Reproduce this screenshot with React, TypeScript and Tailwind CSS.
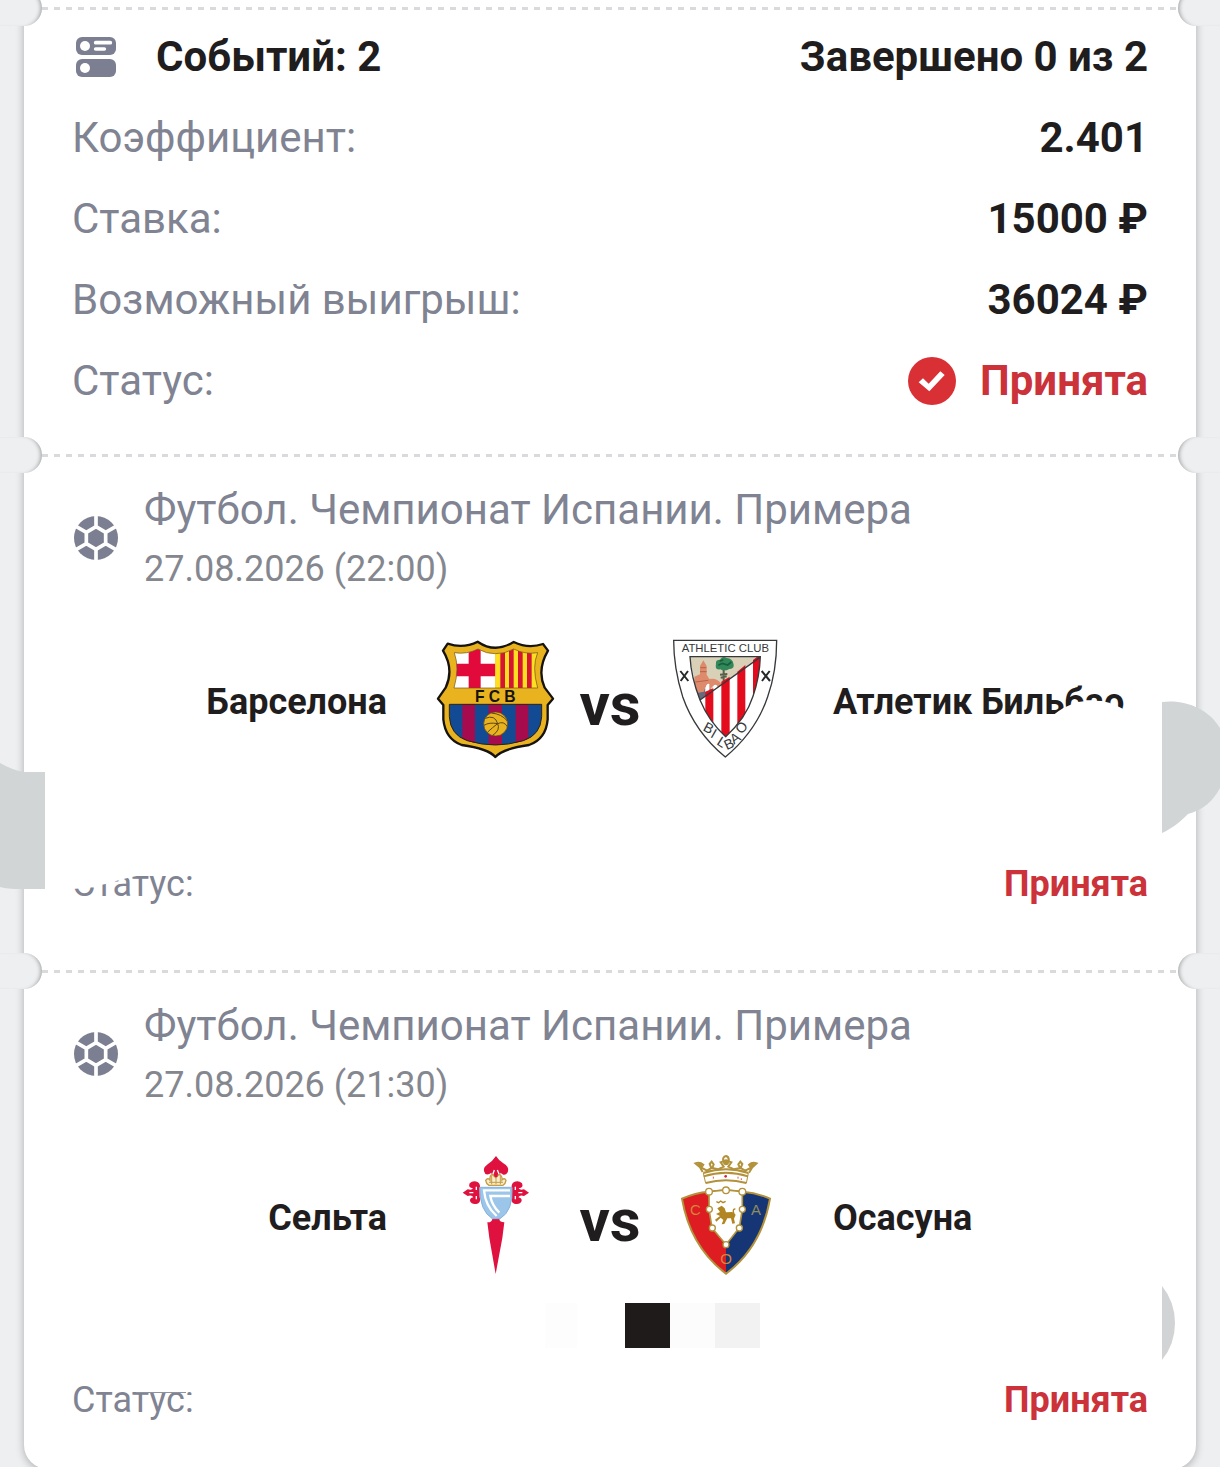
import type { ReactNode } from 'react';
import { clsx } from 'clsx';

function EventsIcon() {
  return (
    <svg viewBox="0 0 144 120" className="h-10 w-12 shrink-0" aria-hidden="true">
      <rect x="12" width="120" height="54" rx="18" fill="#7b7f91" />
      <rect x="12" y="66" width="120" height="54" rx="18" fill="#7b7f91" />
      <circle cx="39" cy="27" r="15" fill="#fff" />
      <circle cx="39" cy="93" r="15" fill="#fff" />
      <path d="M71 17h44M71 36h26" stroke="#fff" strokeWidth="11" strokeLinecap="round" />
    </svg>
  );
}

function BallIcon() {
  return (
    <svg viewBox="-72 -72 144 144" className="size-12 shrink-0" aria-hidden="true">
      <circle r="66" fill="#7b7f91" />
      <path
        d="M0-34 29-17V17L0 34-29 17V-17ZM0-34V-72M29-17 64-37M29 17 64 37M0 34V72M-29 17-64 37M-29-17-64-37"
        fill="none"
        stroke="#fff"
        strokeWidth="11"
      />
    </svg>
  );
}

function AcceptedIcon() {
  return (
    <svg viewBox="0 0 144 144" className="size-12 shrink-0" aria-hidden="true">
      <circle cx="72" cy="72" r="72" fill="#d93036" />
      <path d="M32 76 45 64 62 80 97 43 110 54 64 103Z" fill="#fff" />
    </svg>
  );
}

function BarcelonaCrest() {
  return (
    <svg viewBox="45 57 360 360" className="size-[120px] shrink-0" role="img" aria-label="Барселона">
      <defs>
        <clipPath id="fcb-top">
          <path d="M103 98Q140 104 174 87Q200 102 226 101Q254 102 281 87Q314 104 353 98Q335 140 353 204H102Q119 145 103 98Z" />
        </clipPath>
        <clipPath id="fcb-bottom">
          <path d="M88 253H365V290Q362 345 310 362Q265 375 226 375Q185 375 142 362Q91 345 88 290Z" />
        </clipPath>
      </defs>
      <path
        d="M83 71Q130 87 173 65Q225 101 281 66Q325 87 369 72L384 92Q350 150 374 203L399 236L383 255V298Q378 357 327 375Q248 386 226 411Q205 386 125 375Q76 357 70 298V255L54 236L77 203Q103 148 69 92Z"
        fill="#e9b320"
        stroke="#16130e"
        strokeWidth="7"
        strokeLinejoin="round"
      />
      <g clipPath="url(#fcb-top)">
        <path d="M95 80H226V210H95Z" fill="#fff" />
        <path d="M146 80h36v130h-36zM95 131h131v38H95z" fill="#e2093b" />
        <path d="M226 80H360V210H226Z" fill="#ffdf1f" />
        <path d="M241 80h14v130h-14zM267 80h14v130h-14zM294 80h14v130h-14zM321 80h14v130h-14z" fill="#d41534" />
      </g>
      <path
        d="M103 98Q140 104 174 87Q200 102 226 101Q254 102 281 87Q314 104 353 98Q335 140 353 204H102Q119 145 103 98Z"
        fill="none"
        stroke="#6b5217"
        strokeWidth="2"
      />
      <g clipPath="url(#fcb-bottom)">
        <path d="M80 250H370V380H80Z" fill="#124b94" />
        <path d="M127 250h38v130h-38zM206 250h40v130h-40zM287 250h38v130h-38z" fill="#a60b4e" />
      </g>
      <path
        d="M88 253H365V290Q362 345 310 362Q265 375 226 375Q185 375 142 362Q91 345 88 290Z"
        fill="none"
        stroke="#2a2118"
        strokeWidth="3"
      />
      <circle cx="227" cy="312" r="36" fill="#e9b320" stroke="#5b4515" strokeWidth="2" />
      <path
        d="M196 295Q225 283 233 311Q208 306 192 316M214 279Q245 282 261 302M233 311Q242 330 218 346M233 311Q252 302 262 320M202 337Q218 322 233 311"
        stroke="#5b4515"
        strokeWidth="3"
        fill="none"
      />
      <text
        x="165 206 253"
        y="245"
        className="font-['Liberation_Sans',sans-serif] text-[47px] font-bold"
        fill="#16130e"
      >
        FCB
      </text>
    </svg>
  );
}

function AthleticCrest() {
  return (
    <svg viewBox="75 57 360 360" className="size-[120px] shrink-0" role="img" aria-label="Атлетик Бильбао">
      <defs>
        <clipPath id="ath-inner">
          <path d="M150 110H361Q359 170 339 229Q318 295 257 350Q207 305 180 240Q153 170 150 110Z" />
        </clipPath>
      </defs>
      <path
        d="M101 61H410Q410 155 383 230Q349 333 256 411Q165 336 128 230Q101 145 101 61Z"
        fill="#fff"
        stroke="#36383a"
        strokeWidth="4"
      />
      <g clipPath="url(#ath-inner)">
        <path d="M145 105H365L180 242Z" fill="#d8d1b8" />
        <path d="M145 225 200 205 240 215 180 250Z" fill="#666a7c" />
        <path d="M163 208V170L180 163V138L190 121L200 138V164L208 177Q230 172 243 190L240 208H228Q220 188 212 208H204Q198 190 192 215L166 220Z" fill="#dd8b6c" />
        <path d="M181 143h18M180 155h20M166 186 205 181" stroke="#ba6347" strokeWidth="3" />
        <path d="M195 215Q197 188 208 192V215ZM218 207Q220 188 232 197V208Z" fill="#fff" />
        <path d="M251 145V183M240 164 262 162M242 173 260 169" stroke="#58604a" strokeWidth="6" />
        <path d="M228 132Q226 119 240 119Q247 106 260 114Q278 116 280 130Q285 147 268 147Q252 156 241 148Q224 151 228 132Z" fill="#32885a" />
        <path d="M235 136 247 130 263 135 274 126M239 124 250 119" stroke="#175f3a" strokeWidth="5" fill="none" />
        <path d="M180 240 360 110V360H180Z" fill="#fff" />
        <path d="M196 215 220 205V330H196ZM244 185 269 170V360H244ZM292 155 316 135V310H292ZM339 120 365 100V250H339Z" fill="#e30b1c" />
      </g>
      <path
        d="M150 110H361Q359 170 339 229Q318 295 257 350Q207 305 180 240Q153 170 150 110ZM180 240 360 112"
        fill="none"
        stroke="#36383a"
        strokeWidth="4"
      />
      <path d="M121 153 145 183M144 153 122 183M365 153 390 183M389 153 366 183" stroke="#26282a" strokeWidth="6" />
      <g className="font-['Liberation_Sans',sans-serif] font-normal" fill="#36383a">
        <text x="256" y="97" textAnchor="middle" className="text-[34px]">
          ATHLETIC CLUB
        </text>
        <text
          x="187 209 228 260 282 303"
          y="330 350 372 391 374 344"
          rotate="28 30 32 -25 -35 -45"
          className="text-[42px]"
        >
          BILBAO
        </text>
      </g>
    </svg>
  );
}

function CeltaCrest() {
  return (
    <svg viewBox="-15 45 360 360" className="size-[120px] shrink-0" role="img" aria-label="Сельта">
      <g fill="#df123f">
        <path d="M168 48Q176 61 190 70Q208 80 204 94Q201 105 190 104L181 98Q180 112 183 118H153Q157 105 154 98Q145 106 136 102Q124 87 143 73Q158 63 168 48Z" />
        <path d="M68 158 83 148Q96 151 99 145Q83 143 89 130Q100 119 114 127Q123 134 119 148V171Q124 187 112 191Q95 195 90 183Q89 174 100 172Q96 164 83 168Z" />
        <path d="M267 158 252 148Q239 151 236 145Q252 143 246 130Q235 119 221 127Q212 134 216 148V171Q211 187 223 191Q240 195 245 183Q246 174 235 172Q239 164 252 168Z" />
        <path d="M157 237H178Q179 247 193 247L187 294L167 402L148 294L142 247Q155 248 157 237Z" />
      </g>
      <g fill="none" stroke="#fff" strokeWidth="4">
        <path d="M88 158H100M109 140V150M109 168V178M247 158H235M226 140V150M226 168V178" />
        <path d="M158 104 163 90M178 104 172 90" />
      </g>
      <path
        d="M147 136Q138 130 137 121Q144 112 150 120Q149 103 158 104L167 113 176 104Q187 104 186 120Q193 112 198 121Q197 130 189 136Z"
        fill="#f7edcb"
        stroke="#c69c47"
        strokeWidth="4"
      />
      <path d="M155 107V133M168 113V133M181 107V133M147 127H189" stroke="#c69c47" strokeWidth="3" />
      <circle cx="168" cy="107" r="5" fill="#df123f" />
      <path d="M119 142H216Q220 213 180 236H157Q119 213 119 142Z" fill="#9cc5ea" stroke="#84b2dc" strokeWidth="3" />
      <path d="M210 151H132Q136 198 170 228M210 168H151Q155 195 178 218" fill="none" stroke="#fff" strokeWidth="7" />
    </svg>
  );
}

function OsasunaCrest() {
  return (
    <svg viewBox="75 45 360 360" className="size-[120px] shrink-0" role="img" aria-label="Осасуна">
      <g fill="none" stroke="#b3923c">
        <path d="M190 99Q258 77 325 99M191 109Q258 87 324 109M197 129Q258 113 319 129" strokeWidth="6" />
        <path d="M188 96 180 82 166 70Q179 65 190 74L184 83 201 92 214 84 209 72 215 65 221 73 217 84 234 88 251 80 242 67 250 64Q247 50 258 48Q268 50 266 64L274 67 265 80 282 88 300 84 295 73 301 65 307 72 302 84 316 92 333 83 327 74Q337 65 350 70L337 82 327 98" strokeWidth="6" />
        <path d="M190 99 197 130M325 99 319 130" strokeWidth="3" />
      </g>
      <circle cx="180" cy="75" r="7" fill="#b3923c" />
      <circle cx="337" cy="75" r="7" fill="#b3923c" />
      <circle cx="258" cy="67" r="9" fill="#b3923c" />
      <circle cx="257" cy="109" r="4" fill="#d9213d" />
      <path d="M220 110v6M294 110v6M304 115v5" stroke="#d35b5e" strokeWidth="3" />
      <path d="M126 176Q166 158 206 155L258 150V401Q151 321 126 176Z" fill="#de1d23" />
      <path d="M390 176Q350 158 308 155L258 150V401Q365 321 390 176Z" fill="#153575" />
      <path
        d="M126 176Q166 158 206 155L258 150 308 155Q350 158 390 176Q365 321 258 401Q151 321 126 176Z"
        fill="none"
        stroke="#b3923c"
        strokeWidth="6"
      />
      <path d="M207 155 258 150 307 155V208L298 263 258 314 216 264 207 208Z" fill="#fff" stroke="#b3923c" strokeWidth="5" />
      <path
        d="M232 205 245 197 254 205 258 217 277 216 287 224 282 236 285 250 277 251 273 235 262 235 253 252 245 253 250 240 242 233 229 245 225 239 240 228 228 222 240 216Z"
        fill="#b18622"
      />
      <path d="M282 222Q276 206 286 207M229 185 236 188 242 183 249 188 257 184" fill="none" stroke="#b18622" strokeWidth="4" />
      <g fill="#fff" stroke="#b3923c" strokeWidth="4">
        <circle cx="207" cy="155" r="10" />
        <circle cx="258" cy="151" r="10" />
        <circle cx="307" cy="155" r="10" />
        <circle cx="208" cy="208" r="9" />
        <circle cx="307" cy="208" r="9" />
        <circle cx="217" cy="264" r="9" />
        <circle cx="298" cy="264" r="9" />
        <circle cx="258" cy="314" r="9" />
      </g>
      <g className="font-['Liberation_Sans',sans-serif] text-[45px] font-normal" textAnchor="middle">
        <text x="166" y="225" fill="#d5843a">C</text>
        <text x="348" y="225" fill="#8d8b61">A</text>
        <text x="258" y="372" fill="#d5843a">O</text>
      </g>
    </svg>
  );
}

function Divider({ className }: { className?: string }) {
  return (
    <div className={clsx('flex items-center', className)}>
      <div className="-ml-[30px] h-9 w-12 rounded-r-full bg-[#edeff0] shadow-[inset_-4px_0_4px_-3px_rgba(0,0,0,0.35)]" />
      <div className="h-[3px] flex-1 bg-[repeating-linear-gradient(90deg,#d9dadc_0_6px,transparent_6px_12px)]" />
      <div className="-mr-[30px] h-9 w-12 rounded-l-full bg-[#edeff0] shadow-[inset_4px_0_4px_-3px_rgba(0,0,0,0.35)]" />
    </div>
  );
}

function SummaryRow({ label, children }: { label: string; children: ReactNode }) {
  return (
    <div className="flex items-center justify-between">
      <dt className="text-[#7f8392]">{label}</dt>
      <dd className="flex items-center gap-6 font-bold">{children}</dd>
    </div>
  );
}

interface MatchProps {
  league: string;
  date: string;
  home: string;
  away: ReactNode;
  homeCrest: ReactNode;
  awayCrest: ReactNode;
  outcome?: ReactNode;
  statusMask?: ReactNode;
  children?: ReactNode;
}

function Match({ league, date, home, away, homeCrest, awayCrest, outcome, statusMask, children }: MatchProps) {
  return (
    <section className="relative px-12 pt-3 pb-12">
      <header className="flex items-center gap-6">
        <BallIcon />
        <div className="text-[#7f8392]">
          <h2 className="text-[42px] leading-[49px]">{league}</h2>
          <p className="mt-[14px] text-[36px] leading-[42px] text-[#85878f]">{date}</p>
        </div>
      </header>

      <div className="mt-[49px] grid grid-cols-[1fr_auto_1fr] items-center gap-12 text-[36px] leading-[42px] font-bold">
        <span className="pt-1.5 text-right">{home}</span>
        <div className="flex items-center">
          {homeCrest}
          <span className="w-[110px] pt-3 text-center text-[60px] leading-[70px]">vs</span>
          {awayCrest}
        </div>
        <span className="pt-1.5 whitespace-nowrap">{away}</span>
      </div>

      <div className="mt-7 flex h-[45px] justify-center">{outcome}</div>

      <div className="mt-[31px] flex justify-between text-[36px] leading-[42px]">
        <span className="relative text-[#7f8392]">
          Статус:
          {statusMask}
        </span>
        <span className="font-bold text-[#cb3239]">Принята</span>
      </div>
      {children}
    </section>
  );
}

export default function App() {
  return (
    <main className="h-screen overflow-hidden bg-[#edeff0] px-6 font-[Roboto,sans-serif] text-[#1f1d1d]">
      <article className="rounded-b-3xl bg-white shadow-[0_2px_8px_rgba(0,0,0,0.28)]">
        <Divider className="-mt-[10px]" />
        <section className="px-12 pt-1.5 pb-8 text-[42px] leading-[49px]">
          <header className="flex items-center gap-9 font-bold">
            <EventsIcon />
            <h1 className="flex-1">Событий: 2</h1>
            <span>Завершено 0 из 2</span>
          </header>
          <dl className="mt-8 flex flex-col gap-8">
            <SummaryRow label="Коэффициент:">2.401</SummaryRow>
            <SummaryRow label="Ставка:">15000 ₽</SummaryRow>
            <SummaryRow label="Возможный выигрыш:">36024 ₽</SummaryRow>
            <SummaryRow label="Статус:">
              <AcceptedIcon />
              <span className="text-[#cb3239]">Принята</span>
            </SummaryRow>
          </dl>
        </section>

        <Divider />
        <Match
          league="Футбол. Чемпионат Испании. Примера"
          date="27.08.2026 (22:00)"
          home="Барселона"
          away={
            <span className="relative inline-block">
              Атлетик Бильбао
              <svg viewBox="0 0 84 30" className="absolute -right-1 -bottom-1 h-[30px] w-[84px]" aria-hidden="true">
                <path d="M8 19Q20 9 34 5Q46 3 58 4Q70 6 84 15V30H8Z" fill="#fff" />
              </svg>
            </span>
          }
          homeCrest={<BarcelonaCrest />}
          awayCrest={<AthleticCrest />}
          statusMask={
            <svg viewBox="0 0 80 32" className="absolute top-0 left-0 h-8 w-20" aria-hidden="true">
              <path d="M0 0H80V10Q58 14 44 18Q22 25 0 26Z" fill="#fff" />
            </svg>
          }
        >
          <svg viewBox="0 0 45 126" className="absolute top-[290px] -left-6 h-[126px] w-[45px]" aria-hidden="true">
            <path d="M0 0Q12 7 24 9H45V126H20Q8 126 0 124Z" fill="#d1d5d6" />
          </svg>
          <svg viewBox="0 0 58 132" className="absolute top-[228px] -right-6 h-[132px] w-[58px]" aria-hidden="true">
            <path d="M0 1C22-2 46 7 58 27V87C51 100 41 109 26 113C17 122 9 128 0 132Z" fill="#d1d5d6" />
          </svg>
        </Match>

        <Divider />
        <Match
          league="Футбол. Чемпионат Испании. Примера"
          date="27.08.2026 (21:30)"
          home="Сельта"
          away="Осасуна"
          homeCrest={<CeltaCrest />}
          awayCrest={<OsasunaCrest />}
          outcome={
            <>
              <div className="mr-12 ml-[84px] w-8 bg-[#fdfdfd]" />
              <div className="w-[45px] bg-[#1f1b1a]" />
              <div className="w-[45px] bg-[#fcfcfc]" />
              <div className="w-[45px] bg-[#f2f2f2]" />
            </>
          }
          statusMask={
            <svg viewBox="0 0 60 8" className="absolute top-3 right-0 h-2 w-[60px]" aria-hidden="true">
              <path d="M52 4H60V8H52Z" fill="#fff" />
              <path d="M2 1H52V2H2Z" fill="#8f93a0" />
            </svg>
          }
        >
          <svg viewBox="0 0 14 74" className="absolute top-[297px] right-5 h-[74px] w-[14px]" aria-hidden="true">
            <path d="M0 0Q13 16 13 37Q13 58 0 74Z" fill="#d1d3d4" />
          </svg>
        </Match>
      </article>
    </main>
  );
}
